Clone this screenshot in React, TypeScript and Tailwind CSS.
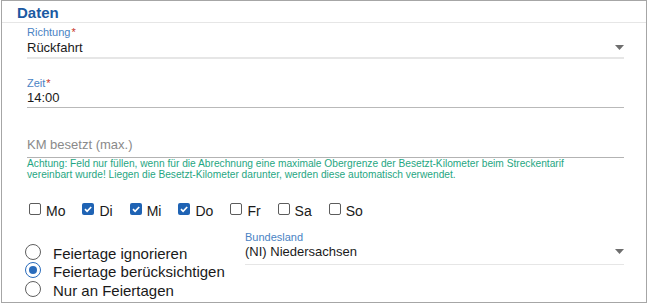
import React from "react";

const days = [
  { name: "Mo", on: false },
  { name: "Di", on: true },
  { name: "Mi", on: true },
  { name: "Do", on: true },
  { name: "Fr", on: false },
  { name: "Sa", on: false },
  { name: "So", on: false },
];

const holidayModes = [
  { name: "Feiertage ignorieren", on: false },
  { name: "Feiertage berücksichtigen", on: true },
  { name: "Nur an Feiertagen", on: false },
];

function Caret() {
  return (
    <svg width="9" height="5" viewBox="0 0 9 5" className="shrink-0">
      <path d="M0 0h9L4.5 5z" fill="#6e6e6e" />
    </svg>
  );
}

function Label({ text, required }: { text: string; required?: boolean }) {
  return (
    <div className="h-[14px] text-[11px] leading-[14px] text-[#4a83c4]">
      {text}
      {required && <span className="ml-[1px] text-[#c8342c]">*</span>}
    </div>
  );
}

function Checkbox({ on }: { on: boolean }) {
  if (on)
    return (
      <span className="flex h-[12px] w-[12px] items-center justify-center rounded-[2px] bg-[#1f63b4]">
        <svg width="10" height="10" viewBox="0 0 10 10">
          <path d="M2 5.2l2.1 2.1L8.2 3" stroke="#fff" strokeWidth="1.7" fill="none" />
        </svg>
      </span>
    );
  return <span className="h-[12px] w-[12px] rounded-[2px] border-[1.5px] border-[#5c5c5c]" />;
}

function Radio({ on }: { on: boolean }) {
  return (
    <span
      className={
        on
          ? "-mt-[1px] flex h-[16px] w-[16px] shrink-0 items-center justify-center rounded-full border-[1.5px] border-[#2a6cbc]"
          : "-mt-[1px] h-[16px] w-[16px] shrink-0 rounded-full border-[1.5px] border-[#5f5f5f]"
      }
    >
      {on && <span className="h-[8px] w-[8px] rounded-full bg-[#2a6cbc]" />}
    </span>
  );
}

export default function App() {
  return (
    <div className="h-[304px] w-[650px] overflow-hidden bg-white font-['Liberation_Sans',Arial,sans-serif]">
      <div className="ml-[1px] h-[303px] w-[646px] border border-[#a6a6a6] bg-white">
        <div className="h-[22px] border-b border-[#e6e6e6] pl-[15px] pt-[2px] text-[15px] font-bold leading-[19px] text-[#1b5aa2]">
          Daten
        </div>

        <div className="pl-[25px] pr-[22px] pt-[2px]">
          {/* Richtung */}
          <div className="border-b-2 border-[#e6e6e6] pb-[2px]">
            <Label text="Richtung" required />
            <div className="flex h-[16px] items-center justify-between pt-[1px] text-[13px] leading-[16px] text-[#1a1a1a]">
              <span>Rückfahrt</span>
              <Caret />
            </div>
          </div>

          {/* Zeit */}
          <div className="mt-[17px] border-b border-[#b9b9b9] pb-[1px]">
            <Label text="Zeit" required />
            <div className="text-[13px] leading-[16px] text-[#1a1a1a]">14:00</div>
          </div>

          {/* KM */}
          <div className="mt-[15px] border-b border-[#b3b3b3] pb-[4px]">
            <div className="h-[14px]" />
            <div className="text-[13px] leading-[16px] text-[#8a8a8a]">KM besetzt (max.)</div>
          </div>
          <p className="text-[10.2px] leading-[11px] text-[#1fa682]">
            Achtung: Feld nur füllen, wenn für die Abrechnung eine maximale Obergrenze der Besetzt-Kilometer beim Streckentarif
            <br />
            vereinbart wurde! Liegen die Besetzt-Kilometer darunter, werden diese automatisch verwendet.
          </p>

          {/* Wochentage */}
          <div className="ml-[2px] mt-[23px] flex gap-[17px]">
            {days.map((d, i) => (
              <label key={i} className="flex items-start gap-[5px] text-[14px] leading-[16px] text-[#1a1a1a]">
                <Checkbox on={d.on} />
                <span className="-mt-[0.5px]">{d.name}</span>
              </label>
            ))}
          </div>

          <div className="mt-[12px] flex">
            <div className="-ml-[2px] w-[220px] pt-[14px]">
              {holidayModes.map((m, i) => (
                <div key={i} className="flex h-[18.5px] items-start gap-[12px] text-[15px] leading-[18.5px] text-[#1a1a1a]">
                  <Radio on={m.on} />
                  <span>{m.name}</span>
                </div>
              ))}
            </div>
            <div className="flex-1">
              <div className="border-b border-[#e6e6e6] pb-[4px]">
                <div className="text-[11px] leading-[13px] text-[#4a83c4]">Bundesland</div>
                <div className="flex h-[16px] items-center justify-between text-[13px] leading-[16px] text-[#1a1a1a]">
                  <span>(NI) Niedersachsen</span>
                  <Caret />
                </div>
              </div>
            </div>
          </div>
        </div>
      </div>
    </div>
  );
}
